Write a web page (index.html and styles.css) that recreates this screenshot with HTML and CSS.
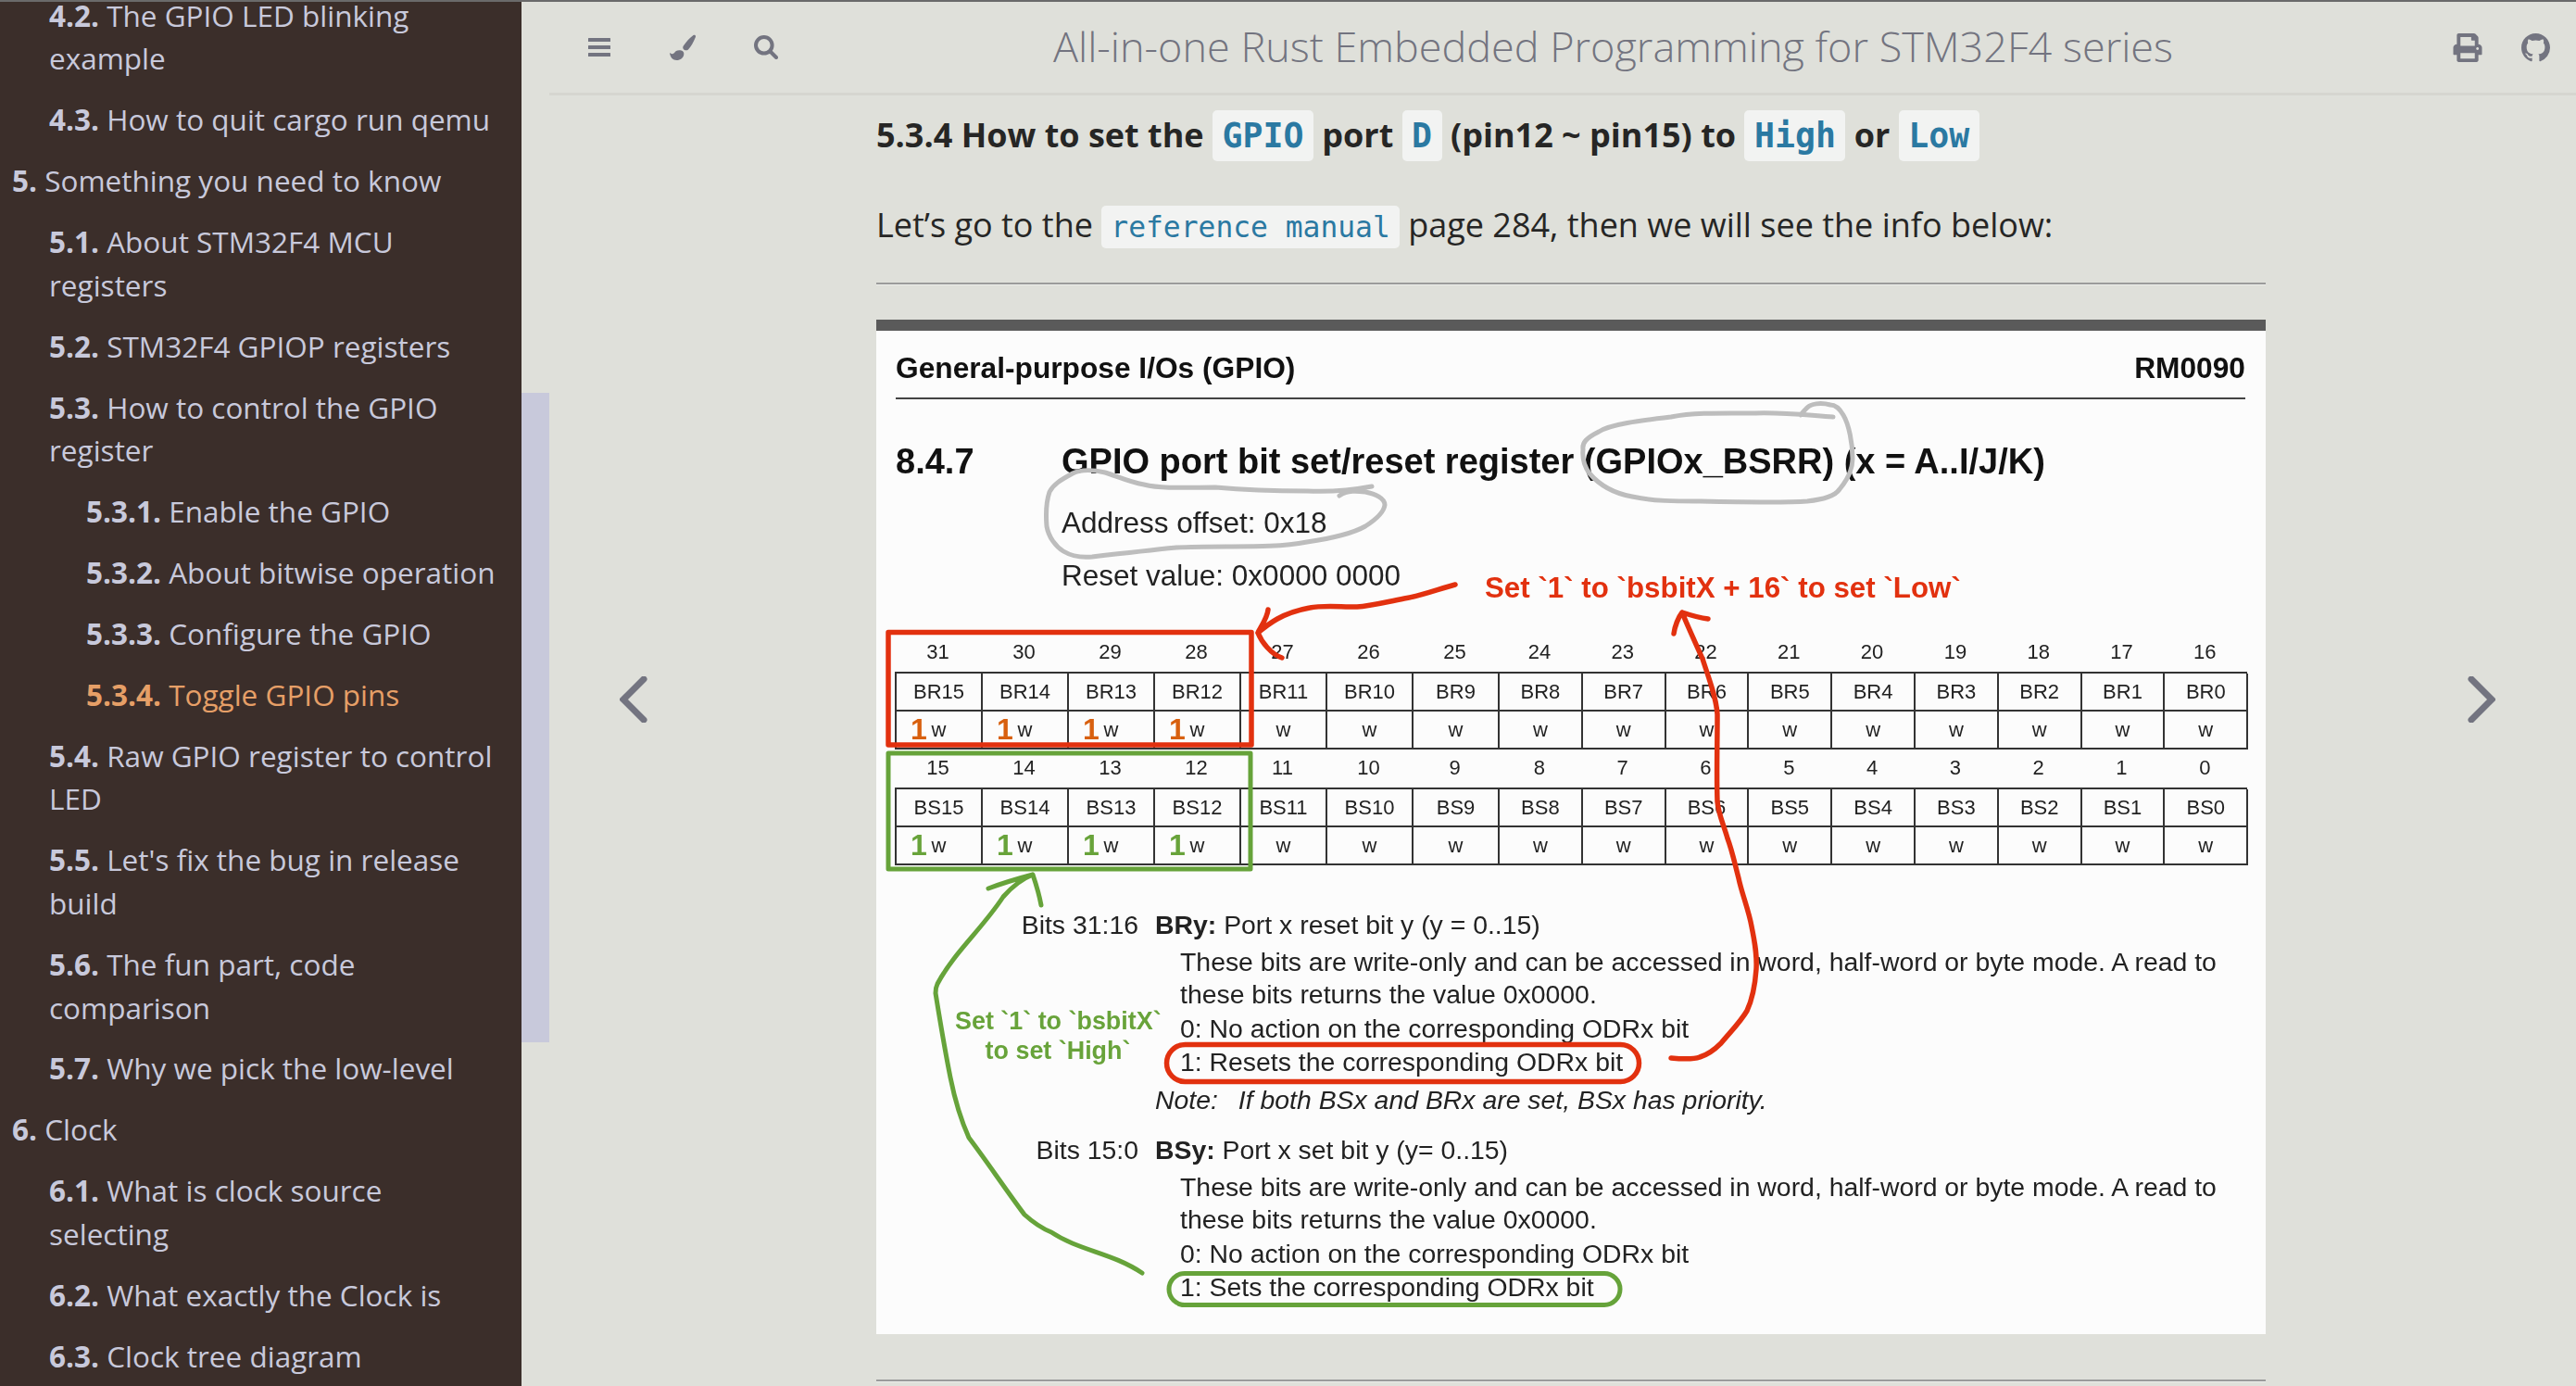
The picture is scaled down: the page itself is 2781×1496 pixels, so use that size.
FILE: index.html
```html
<!DOCTYPE html>
<html lang="en">
<head>
<meta charset="utf-8">
<title>All-in-one Rust Embedded Programming for STM32F4 series</title>
<link rel="stylesheet" href="styles.css">
</head>
<body>
<div class="top-edge"></div>
<div class="app">
  <nav class="sidebar">
    <ol class="toc">
      <li class="l2"><strong>4.2.</strong> The GPIO LED blinking example</li>
      <li class="l2"><strong>4.3.</strong> How to quit cargo run qemu</li>
      <li class="l1"><strong>5.</strong> Something you need to know</li>
      <li class="l2"><strong>5.1.</strong> About STM32F4 MCU registers</li>
      <li class="l2"><strong>5.2.</strong> STM32F4 GPIOP registers</li>
      <li class="l2"><strong>5.3.</strong> How to control the GPIO register</li>
      <li class="l3"><strong>5.3.1.</strong> Enable the GPIO</li>
      <li class="l3"><strong>5.3.2.</strong> About bitwise operation</li>
      <li class="l3"><strong>5.3.3.</strong> Configure the GPIO</li>
      <li class="l3 active"><strong>5.3.4.</strong> Toggle GPIO pins</li>
      <li class="l2"><strong>5.4.</strong> Raw GPIO register to control LED</li>
      <li class="l2"><strong>5.5.</strong> Let's fix the bug in release build</li>
      <li class="l2"><strong>5.6.</strong> The fun part, code comparison</li>
      <li class="l2"><strong>5.7.</strong> Why we pick the low-level</li>
      <li class="l1"><strong>6.</strong> Clock</li>
      <li class="l2"><strong>6.1.</strong> What is clock source selecting</li>
      <li class="l2"><strong>6.2.</strong> What exactly the Clock is</li>
      <li class="l2"><strong>6.3.</strong> Clock tree diagram</li>
    </ol>
  </nav>
  <div class="scroll-track"><div class="scroll-thumb"></div></div>
  <div class="page">
    <header class="menu-bar">
      <div class="left-buttons">
        <button class="icon-btn" aria-label="Toggle Table of Contents">
          <svg class="ic-bars" viewBox="0 0 24 20"><rect width="24" height="4" rx="0.5"/><rect y="8" width="24" height="4" rx="0.5"/><rect y="16" width="24" height="4" rx="0.5"/></svg>
        </button>
        <button class="icon-btn" aria-label="Change theme">
          <svg class="ic-brush" viewBox="0 0 28 28"><path d="M25.5 1C27 .2 28.6 1.4 27.8 3.2 26 8 23 13 20 16.5 18.5 18 15.5 17.5 14.5 15.5 14 14.5 14.2 13.5 14.8 12.5 17.5 8.5 21.5 3.8 25.5 1Z"/><path d="M12.5 17.5C14.5 18 15.5 19.5 15.3 21.5 15 25.5 11.5 28 7.5 28 3.5 28 .5 25 0 20 1 21 2.5 21.5 3.5 21 5 20.5 5.5 19 7 18 8.5 17 10.8 17 12.5 17.5Z"/></svg>
        </button>
        <button class="icon-btn" aria-label="Search">
          <svg class="ic-search" viewBox="0 0 26 26"><circle cx="10.8" cy="10.8" r="8.8" fill="none" stroke="currentColor" stroke-width="4"/><path d="M17.5 17.5L24 24" fill="none" stroke="currentColor" stroke-width="4" stroke-linecap="round"/></svg>
        </button>
      </div>
      <h1 class="menu-title">All-in-one Rust Embedded Programming for STM32F4 series</h1>
      <div class="right-buttons">
        <svg class="ic-print" viewBox="0 0 512 512"><path d="M448 192V77.25c0-8.49-3.37-16.62-9.37-22.63L393.37 9.37c-6-6-14.14-9.37-22.63-9.37H96C78.33 0 64 14.33 64 32v160c-35.35 0-64 28.65-64 64v112c0 8.84 7.16 16 16 16h48v96c0 17.67 14.33 32 32 32h320c17.67 0 32-14.33 32-32v-96h48c8.84 0 16-7.16 16-16V256c0-35.35-28.65-64-64-64zm-64 256H128v-96h256v96zm0-224H128V64h192v48c0 8.84 7.16 16 16 16h48v96zm48 72c-13.25 0-24-10.75-24-24 0-13.26 10.75-24 24-24s24 10.74 24 24c0 13.25-10.75 24-24 24z"/></svg>
        <svg class="ic-github" viewBox="0 0 16 16"><path d="M8 0C3.58 0 0 3.58 0 8c0 3.54 2.29 6.53 5.47 7.59.4.07.55-.17.55-.38 0-.19-.01-.82-.01-1.49-2.01.37-2.53-.49-2.69-.94-.09-.23-.48-.94-.82-1.13-.28-.15-.68-.52-.01-.53.63-.01 1.08.58 1.23.82.72 1.21 1.87.87 2.33.66.07-.52.28-.87.51-1.07-1.78-.2-3.64-.89-3.64-3.95 0-.87.31-1.59.82-2.15-.08-.2-.36-1.02.08-2.12 0 0 .67-.21 2.2.82.64-.18 1.32-.27 2-.27.68 0 1.36.09 2 .27 1.53-1.04 2.2-.82 2.2-.82.44 1.1.16 1.92.08 2.12.51.56.82 1.27.82 2.15 0 3.07-1.87 3.75-3.65 3.95.29.25.54.73.54 1.48 0 1.07-.01 1.93-.01 2.2 0 .21.15.46.55.38A8.013 8.013 0 0016 8c0-4.42-3.58-8-8-8z"/></svg>
      </div>
    </header>
    <div class="page-body">
      <div class="nav-prev">
        <svg class="chevron" viewBox="0 0 30 50"><path d="M26 3L4 25L26 47"/></svg>
      </div>
      <main class="content">
        <h3 class="section-title">5.3.4 How to set the <code>GPIO</code> port <code>D</code> (pin12 ~ pin15) to <code>High</code> or <code>Low</code></h3>
        <p class="intro">Let’s go to the <code>reference manual</code> page 284, then we will see the info below:</p>
        <hr class="rule">
        <figure class="manual">
          <div class="manual-head"><span>General-purpose I/Os (GPIO)</span><span>RM0090</span></div>
          <div class="manual-title"><span class="manual-num">8.4.7</span><span>GPIO port bit set/reset register (GPIOx_BSRR) (x = A..I/J/K)</span></div>
          <p class="manual-meta meta-addr">Address offset: 0x18</p>
          <p class="manual-meta meta-reset">Reset value: 0x0000 0000</p>

          <div class="reg reg-high">
            <div class="reg-nums"><span>31</span><span>30</span><span>29</span><span>28</span><span>27</span><span>26</span><span>25</span><span>24</span><span>23</span><span>22</span><span>21</span><span>20</span><span>19</span><span>18</span><span>17</span><span>16</span></div>
            <div class="reg-cells">
              <span>BR15</span><span>BR14</span><span>BR13</span><span>BR12</span><span>BR11</span><span>BR10</span><span>BR9</span><span>BR8</span><span>BR7</span><span>BR6</span><span>BR5</span><span>BR4</span><span>BR3</span><span>BR2</span><span>BR1</span><span>BR0</span>
              <span class="mark-red">w</span><span class="mark-red">w</span><span class="mark-red">w</span><span class="mark-red">w</span><span>w</span><span>w</span><span>w</span><span>w</span><span>w</span><span>w</span><span>w</span><span>w</span><span>w</span><span>w</span><span>w</span><span>w</span>
            </div>
          </div>
          <div class="reg reg-low">
            <div class="reg-nums"><span>15</span><span>14</span><span>13</span><span>12</span><span>11</span><span>10</span><span>9</span><span>8</span><span>7</span><span>6</span><span>5</span><span>4</span><span>3</span><span>2</span><span>1</span><span>0</span></div>
            <div class="reg-cells">
              <span>BS15</span><span>BS14</span><span>BS13</span><span>BS12</span><span>BS11</span><span>BS10</span><span>BS9</span><span>BS8</span><span>BS7</span><span>BS6</span><span>BS5</span><span>BS4</span><span>BS3</span><span>BS2</span><span>BS1</span><span>BS0</span>
              <span class="mark-green">w</span><span class="mark-green">w</span><span class="mark-green">w</span><span class="mark-green">w</span><span>w</span><span>w</span><span>w</span><span>w</span><span>w</span><span>w</span><span>w</span><span>w</span><span>w</span><span>w</span><span>w</span><span>w</span>
            </div>
          </div>

          <div class="bits bits-first">
            <div class="bits-label">Bits 31:16</div>
            <div class="bits-body">
              <p class="bits-head"><b>BRy:</b> Port x reset bit y (y = 0..15)</p>
              <div class="bits-text">
                <p class="desc">These bits are write-only and can be accessed in word, half-word or byte mode. A read to<br>these bits returns the value 0x0000.</p>
                <p class="opt-0">0: No action on the corresponding ODRx bit</p>
                <p class="opt-1">1: Resets the corresponding ODRx bit</p>
              </div>
              <p class="note"><i>Note:</i><i class="note-text">If both BSx and BRx are set, BSx has priority.</i></p>
            </div>
          </div>
          <div class="bits bits-second">
            <div class="bits-label">Bits 15:0</div>
            <div class="bits-body">
              <p class="bits-head"><b>BSy:</b> Port x set bit y (y= 0..15)</p>
              <div class="bits-text">
                <p class="desc">These bits are write-only and can be accessed in word, half-word or byte mode. A read to<br>these bits returns the value 0x0000.</p>
                <p class="opt-0">0: No action on the corresponding ODRx bit</p>
                <p class="opt-1">1: Sets the corresponding ODRx bit</p>
              </div>
            </div>
          </div>

          <svg class="ink" viewBox="946 347 1500 1095" fill="none" stroke-linecap="round" stroke-linejoin="round">
            <path class="ink-grey" d="M1979 452C1950 450 1925 447 1895 448C1860 448 1830 447 1804 452C1770 456 1738 460 1726 468C1712 475 1708 480 1709 487C1708 497 1710 505 1716 513C1728 527 1745 535 1762 538C1785 543 1810 543 1832 543C1880 544 1925 545 1951 543C1970 541 1982 536 1986 530C1996 518 2000 508 2000 497C2000 480 1996 460 1990 450C1986 443 1981 439 1976 439C1965 436 1955 438 1951 442C1947 446 1945 448 1944 450"/>
            <path class="ink-grey" d="M1481 527C1460 531 1435 533 1411 532C1380 532 1345 531 1312 528C1285 528 1255 530 1235 525C1218 522 1206 516 1193 512C1180 509 1168 508 1158 513C1145 520 1137 525 1133 533C1129 545 1129 558 1130 570C1132 582 1140 592 1148 597C1158 603 1168 604 1179 603C1205 600 1240 596 1270 593C1320 590 1370 595 1411 587C1438 583 1460 578 1474 570C1485 563 1494 555 1495 547C1495 540 1485 535 1474 533C1465 532 1455 531 1446 537"/>
            <rect class="ink-red" x="959" y="684.5" width="392" height="121.5"/>
            <rect class="ink-green" x="959" y="815" width="391" height="125"/>
            <path class="ink-red" d="M1571 633C1555 637 1535 645 1516 648C1495 652 1480 656 1465 657C1445 657 1428 655 1414 658C1398 661 1388 665 1379 670C1370 675 1364 680 1358 685M1369 660C1368 670 1360 680 1358 685C1362 695 1372 708 1384 712"/>
            <path class="ink-red" d="M1804 1144C1815 1145 1827 1146 1835 1143C1845 1140 1852 1134 1858 1128C1868 1116 1879 1105 1886 1093C1892 1080 1895 1062 1896 1048C1897 1030 1894 1018 1891 1002C1888 985 1880 965 1877 950C1873 935 1870 920 1865 907C1860 890 1855 880 1854 867C1853 840 1854 805 1854 773C1853 755 1845 735 1838 713C1830 695 1822 678 1816 663M1807 686C1808 678 1812 668 1816 663C1825 666 1835 669 1844 670"/>
            <path class="ink-green" d="M1233 1376C1200 1354 1165 1352 1135 1332C1125 1328 1116 1322 1106 1313C1085 1285 1065 1255 1046 1230C1037 1210 1030 1185 1026 1165C1020 1135 1015 1105 1010 1074C1010 1070 1011 1066 1012 1064C1030 1030 1060 1005 1083 970C1090 962 1100 952 1115 946M1067 961C1080 956 1100 950 1115 946C1118 955 1122 968 1124 979"/>
            <rect class="ink-red" x="1259.5" y="1129.5" width="510" height="40" rx="20"/>
            <rect class="ink-green" x="1262" y="1376.5" width="487" height="34" rx="17"/>
          </svg>
          <span class="ink-note note-red">Set `1` to `bsbitX + 16` to set `Low`</span>
          <span class="ink-note note-green">Set `1` to `bsbitX`<br>to set `High`</span>
        </figure>
        <hr class="rule rule-end">
      </main>
      <div class="nav-next">
        <svg class="chevron" viewBox="0 0 30 50"><path d="M4 3L26 25L4 47"/></svg>
      </div>
    </div>
  </div>
</div>
</body>
</html>
```
FILE: styles.css
```css
* { box-sizing: border-box; }
html, body { margin: 0; padding: 0; height: 100%; overflow: hidden; }
body { background: #dfe0da; color: #262625; font-family: "Open Sans", sans-serif; font-size: 36px; }
.top-edge { height: 2px; background: #6a6a6a; }
.app { display: flex; height: 1494px; overflow: hidden; }

.sidebar { width: 563px; flex: none; background: #3b2e2a; color: #c8c9db; overflow: hidden; }
.toc { list-style: none; margin: -27.5px 0 0; padding: 0 20px 0 13px; font-size: 31.5px; line-height: 46.7px; }
.toc li { margin-top: 19.2px; }
.toc .l2 { padding-left: 40px; }
.toc .l3 { padding-left: 80px; }
.toc .active { color: #e69f67; }
.toc strong { font-weight: 700; }

.scroll-track { width: 30px; flex: none; }
.scroll-thumb { margin-top: 422px; height: 701px; background: #c8c9db; }

.page { flex: 1; min-width: 0; display: flex; flex-direction: column; }
.menu-bar { display: flex; align-items: center; height: 101px; flex: none; border-bottom: 3px solid #d6d6d0; color: #737480; }
.left-buttons { display: flex; width: 279px; padding-left: 9px; flex: none; }
.icon-btn { width: 90px; height: 60px; padding: 0; border: 0; background: none; color: inherit; display: flex; align-items: center; justify-content: center; }
.icon-btn svg, .right-buttons svg { fill: currentColor; display: block; }
.ic-bars { width: 24px; height: 20px; }
.ic-brush { width: 28px; height: 28px; }
.ic-search { width: 26px; height: 26px; }
.menu-title { flex: 1; margin: 0 0 3px; text-align: center; font-size: 45px; font-weight: 300; line-height: 60px; }
.right-buttons { width: 170px; flex: none; display: flex; justify-content: flex-end; align-items: center; gap: 41px; padding-right: 28px; }
.ic-print { width: 34px; height: 31px; }
.ic-github { width: 31px; height: 31px; }

.page-body { flex: 1; display: flex; min-height: 0; }
.nav-prev { width: 353px; flex: none; padding: 627px 0 0 76px; }
.nav-next { flex: 1; padding: 627px 0 0 218px; }
.chevron { display: block; width: 30px; height: 50px; fill: none; stroke: #737480; stroke-width: 7; stroke-linecap: round; stroke-linejoin: miter; }
.content { width: 1500px; flex: none; }

.section-title { margin: 16px 0 0; font-size: 36px; font-weight: 700; line-height: 54px; white-space: nowrap; }
code { font-family: "DejaVu Sans Mono", monospace; font-size: 31.3px; font-weight: inherit; color: #2b79a2; background: #f2f3f2; padding: 5px 10px; border-radius: 5px; }
.section-title code { font-size: 36.5px; padding: 6px 10.5px; }
.intro { margin: 42px 0 0; line-height: 54px; white-space: nowrap; }
.rule { margin: 33px 0 0; height: 3px; border: 0; border-top: 2px solid #9b9b9b; border-bottom: 1px solid #eceeea; }
.rule-end { margin-top: 49px; }

.manual { position: relative; margin: 37px 0 0; height: 1095px; background: #fcfcfc; border-top: 12px solid #5a5a5a; color: #222; font-family: "Liberation Sans", Arial, sans-serif; font-size: 28.4px; filter: blur(0.45px); }
.manual p { margin: 0; }
.manual-head { display: flex; justify-content: space-between; margin: 0 22px 0 21px; padding: 21.5px 0 14px; line-height: 36px; font-size: 31.7px; font-weight: 700; border-bottom: 2px solid #444; color: #111; }
.manual-title { display: flex; margin: 47px 0 0 21px; line-height: 40px; font-size: 38px; font-weight: 700; color: #111; }
.manual-num { width: 179px; flex: none; }
.manual-meta { margin-left: 200px !important; font-size: 31.5px; line-height: 34px; }
.meta-addr { margin-top: 29px !important; }
.meta-reset { margin-top: 23px !important; }

.reg { margin-left: 20px; width: 1460px; font-size: 22px; }
.reg-high { margin-top: 51.5px; }
.reg-low { margin-top: 4.5px; }
.reg-nums { display: grid; grid-template-columns: repeat(7, 93px) repeat(9, 89.8px); line-height: 30px; padding-bottom: 6px; text-align: center; }
.reg-cells { display: grid; grid-template-columns: repeat(7, 93px) repeat(9, 89.8px); border-top: 2px solid #333; border-left: 2px solid #333; }
.reg-cells span { position: relative; height: 41px; line-height: 39px; text-align: center; border-right: 2px solid #333; border-bottom: 2px solid #333; }
.mark-red::before, .mark-green::before { content: "1"; position: absolute; left: 15px; top: 0; font-size: 32px; font-weight: 700; line-height: 39px; }
.mark-red::before { color: #d8600f; }
.mark-green::before { color: #68a33a; }

.bits { display: grid; grid-template-columns: 262px 1fr; column-gap: 18px; margin-left: 21px; line-height: 36px; }
.bits-first { margin-top: 46px; }
.bits-second { margin-top: 18.5px; }
.bits-label { text-align: right; }
.bits-text { margin-left: 27px; }
.desc { line-height: 35px; margin-top: 5px !important; }
.opt-0 { margin-top: 1px !important; }
.opt-1 { margin-top: 0 !important; }
.note { margin-top: 5px !important; }
.note-text { margin-left: 22px; }

.ink { position: absolute; left: 0; top: -12px; width: 1500px; height: 1095px; }
.ink-grey { stroke: #bdbdbd; stroke-width: 5; }
.ink-red { stroke: #e2310f; stroke-width: 5.5; }
.ink-green { stroke: #66a33a; stroke-width: 5; }
.ink-note { position: absolute; font-weight: 700; line-height: 32px; }
.note-red { left: 657px; top: 261.5px; font-size: 31.3px; color: #e2310f; white-space: nowrap; }
.note-green { left: 85px; top: 729px; width: 222px; font-size: 26.9px; text-align: center; color: #68a33a; white-space: nowrap; }
```
